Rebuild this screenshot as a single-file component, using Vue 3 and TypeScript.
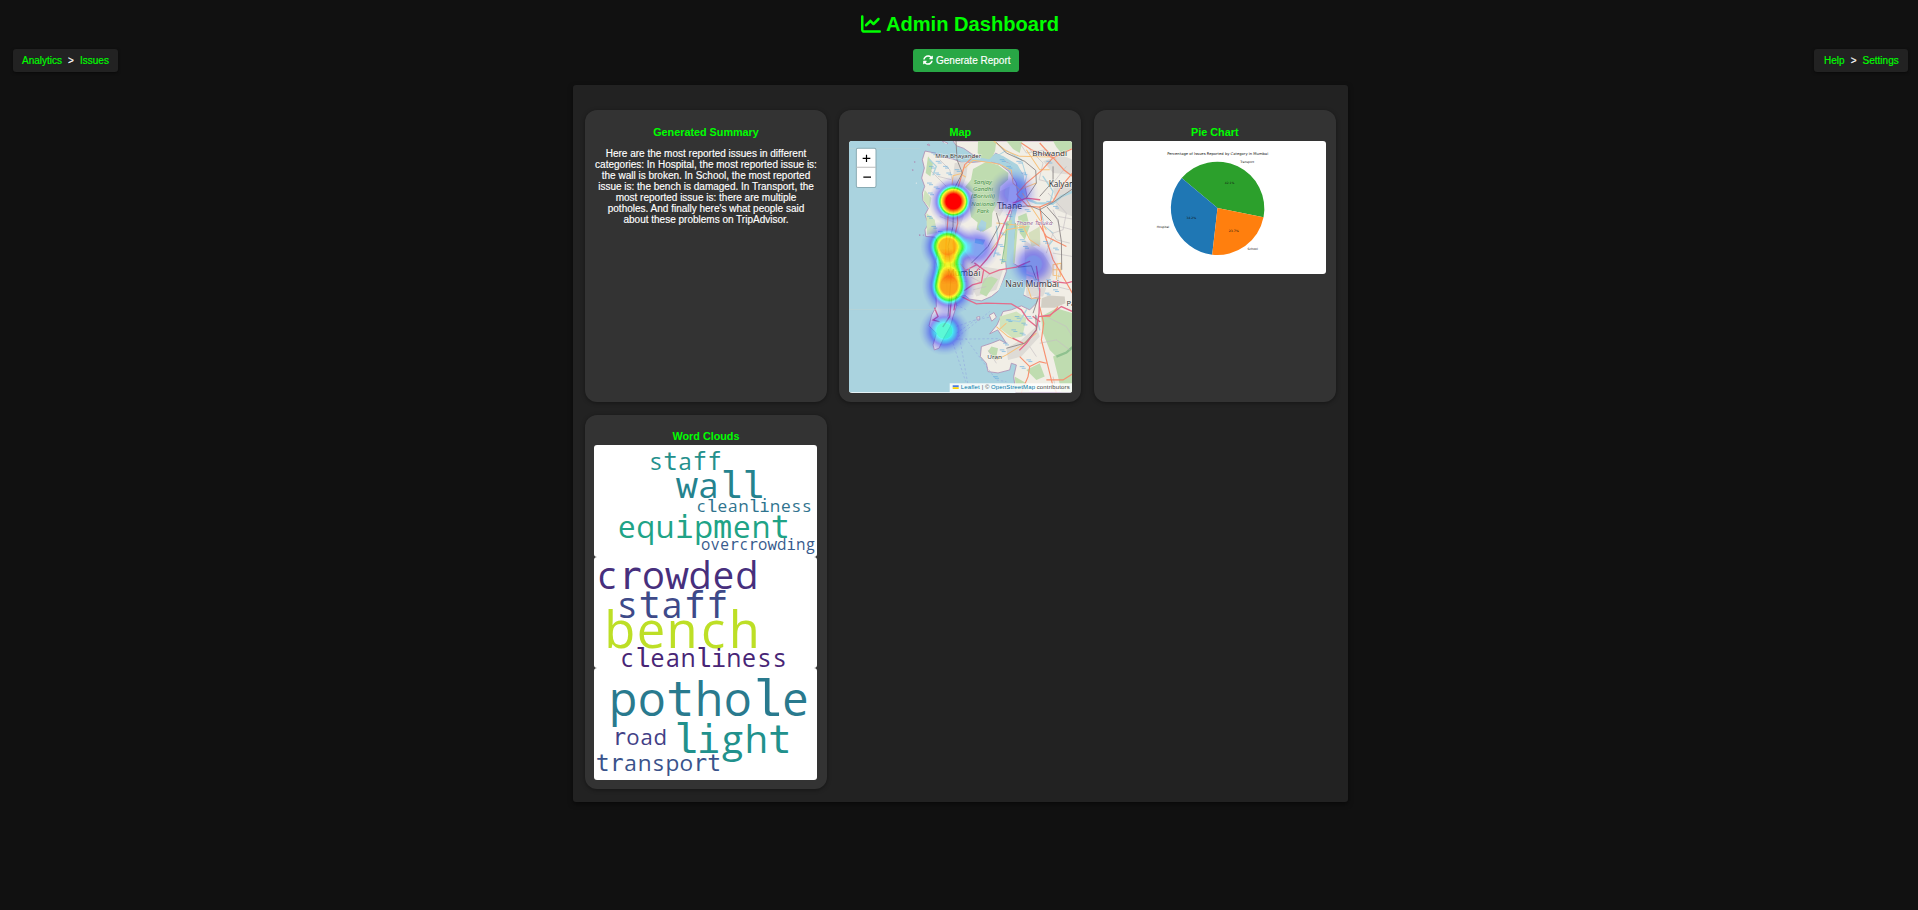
<script setup lang="ts">
interface Word { text: string; x0: number; x1: number; y: number; color: string }
interface Cloud { box: string; words: Word[] }
interface Label { text: string; x: number; y: number; w: number; size: number; kind: string }

const summary: string[] = [
  'Here are the most reported issues in different',
  'categories: In Hospital, the most reported issue is:',
  'the wall is broken. In School, the most reported',
  'issue is: the bench is damaged. In Transport, the',
  'most reported issue is: there are multiple',
  "potholes. And finally here's what people said",
  'about these problems on TripAdvisor.',
]

const clouds: Cloud[] = [
  {
    box: '42 120 669 336',
    words: [
      { text: 'staff', x0: 209, x1: 422, y: 194, color: '#24908c' },
      { text: 'wall', x0: 293, x1: 544, y: 279, color: '#25838e' },
      { text: 'cleanliness', x0: 350, x1: 694, y: 321, color: '#2f738e' },
      { text: 'equipment', x0: 116, x1: 625, y: 399, color: '#20a386' },
      { text: 'overcrowding', x0: 365, x1: 703, y: 436, color: '#375a8c' },
    ],
  },
  {
    box: '42 456 669 333',
    words: [
      { text: 'crowded', x0: 51, x1: 530, y: 551, color: '#472f7d' },
      { text: 'staff', x0: 113, x1: 440, y: 639, color: '#3e4a89' },
      { text: 'bench', x0: 80, x1: 532, y: 726, color: '#bddf26' },
      { text: 'cleanliness', x0: 122, x1: 618, y: 785, color: '#482576' },
    ],
  },
  {
    box: '42 204 669 336',
    words: [
      { text: 'pothole', x0: 93, x1: 682, y: 347, color: '#297a8e' },
      { text: 'road', x0: 101, x1: 258, y: 435, color: '#424086' },
      { text: 'light', x0: 285, x1: 630, y: 459, color: '#21918c' },
      { text: 'transport', x0: 51, x1: 420, y: 514, color: '#3a538b' },
    ],
  },
]

const advance = (w: Word): number => (w.x1 - w.x0) / (w.text.length - 0.16)
const charX = (w: Word, i: number): number => w.x0 + advance(w) * (0.42 + i)
const glyphClass = (ch: string): string => (ch === 'l' ? 'slab' : 'rftimw'.includes(ch) ? 'mono' : 'round')

const labels: Label[] = [
  { text: 'Mira Bhayander', x: 287, y: 85, w: 138, size: 18, kind: 'town' },
  { text: 'Bhiwandi', x: 578, y: 80, w: 104, size: 23, kind: 'town' },
  { text: 'Kalyan', x: 627, y: 172, w: 76, size: 24, kind: 'town' },
  { text: 'Thane', x: 472, y: 237, w: 75, size: 25, kind: 'town' },
  { text: 'Mumbai', x: 322, y: 438, w: 100, size: 25, kind: 'town' },
  { text: 'Navi Mumbai', x: 497, y: 473, w: 161, size: 25, kind: 'town' },
  { text: 'Uran', x: 443, y: 687, w: 44, size: 18, kind: 'town' },
  { text: 'Pa', x: 680, y: 528, w: 26, size: 21, kind: 'town' },
  { text: 'Thane Taluka', x: 530, y: 287, w: 108, size: 17, kind: 'district' },
  { text: 'Sanjay', x: 402, y: 162, w: 55, size: 18, kind: 'park' },
  { text: 'Gandhi', x: 400, y: 184, w: 60, size: 18, kind: 'park' },
  { text: '(Borivili)', x: 394, y: 206, w: 72, size: 18, kind: 'park' },
  { text: 'National', x: 395, y: 228, w: 70, size: 18, kind: 'park' },
  { text: 'Park', x: 411, y: 250, w: 37, size: 18, kind: 'park' },
]

const heat = [
  { x: 341, y: 215, rx: 75, ry: 75, o: 1 },
  { x: 324, y: 350, rx: 82, ry: 80, o: 0.86 },
  { x: 328, y: 467, rx: 82, ry: 92, o: 0.88 },
  { x: 328, y: 410, rx: 66, ry: 56, o: 0.52 },
  { x: 410, y: 355, rx: 70, ry: 70, o: 0.46 },
  { x: 520, y: 190, rx: 78, ry: 76, o: 0.42 },
  { x: 581, y: 403, rx: 76, ry: 76, o: 0.44 },
  { x: 314, y: 603, rx: 76, ry: 74, o: 0.62 },
]

// Short dashes that mark the mangrove belts along the creeks
const marsh: number[][] = [
  [275, 70], [288, 95], [268, 110], [284, 130], [262, 160], [282, 172], [265, 190], [310, 110], [320, 130], [345, 120],
  [262, 260], [275, 290], [295, 305], [480, 90], [500, 110], [530, 95], [545, 130], [500, 255], [490, 280], [480, 310],
  [475, 345], [465, 370], [480, 390], [535, 300], [540, 330], [550, 350], [615, 490], [640, 480], [585, 450], [620, 450],
  [500, 570], [525, 560], [545, 580], [515, 600], [540, 610], [560, 560], [480, 660], [490, 640], [590, 70], [620, 95],
  [555, 240], [640, 230], [620, 215], [460, 740], [560, 690], [540, 710], [640, 355], [610, 335],
]
</script>

<template>
  <div class="page">
    <h1 class="brand">
      <svg class="brand-icon" viewBox="0 0 512 512"><path d="M64 64c0-17.7-14.3-32-32-32S0 46.3 0 64V400c0 44.2 35.8 80 80 80H480c17.7 0 32-14.3 32-32s-14.3-32-32-32H80c-8.8 0-16-7.2-16-16V64zm406.6 86.6c12.5-12.5 12.5-32.8 0-45.3s-32.8-12.5-45.3 0L320 210.7l-57.4-57.4c-12.5-12.5-32.8-12.5-45.3 0l-112 112c-12.5 12.5-12.5 32.8 0 45.3s32.8 12.5 45.3 0L240 221.3l57.4 57.4c12.5 12.5 32.8 12.5 45.3 0l128-128z" /></svg>
      <span>Admin Dashboard</span>
    </h1>

    <nav class="bar">
      <div class="crumbs left"><a>Analytics</a><b>&gt;</b><a>Issues</a></div>
      <button class="report">
        <svg viewBox="0 0 512 512"><path d="M370.72 133.28C339.458 104.008 298.888 87.962 255.848 88c-77.458.068-144.328 53.178-162.791 126.85-1.344 5.363-6.122 9.15-11.651 9.15H24.103c-7.498 0-13.194-6.807-11.807-14.176C33.933 94.924 134.813 8 256 8c66.448 0 126.791 26.136 171.315 68.685L463.03 40.97C478.149 25.851 504 36.559 504 57.941V192c0 13.255-10.745 24-24 24H345.941c-21.382 0-32.09-25.851-16.971-40.971l41.75-41.749zM32 296h134.059c21.382 0 32.09 25.851 16.971 40.971l-41.75 41.75c31.262 29.273 71.835 45.319 114.876 45.28 77.418-.07 144.315-53.144 162.787-126.849 1.344-5.363 6.122-9.15 11.651-9.15h57.304c7.498 0 13.194 6.807 11.807 14.176C478.067 417.076 377.187 504 256 504c-66.448 0-126.791-26.136-171.315-68.685L48.97 471.03C33.851 486.149 8 475.441 8 454.059V320c0-13.255 10.745-24 24-24z" /></svg>
        <span>Generate Report</span>
      </button>
      <div class="crumbs right"><a>Help</a><b>&gt;</b><a>Settings</a></div>
    </nav>

    <main class="panel">
      <section class="card">
        <h3>Generated Summary</h3>
        <p class="summary"><span v-for="line in summary" :key="line">{{ line }}</span></p>
      </section>

      <section class="card">
        <h3>Map</h3>
        <svg class="map" viewBox="28 34 670 753" preserveAspectRatio="none">
          <defs>
            <radialGradient id="spot">
              <stop offset="0" stop-opacity="1" /><stop offset=".3" stop-opacity="1" />
              <stop offset=".48" stop-opacity=".8" /><stop offset=".56" stop-opacity=".66" />
              <stop offset=".63" stop-opacity=".5" /><stop offset=".75" stop-opacity=".27" />
              <stop offset=".88" stop-opacity=".09" /><stop offset="1" stop-opacity="0" />
            </radialGradient>
            <filter id="ramp" x="0" y="0" width="1" height="1" color-interpolation-filters="sRGB">
              <feColorMatrix values="0 0 0 1 0  0 0 0 1 0  0 0 0 1 0  0 0 0 1 0" />
              <feComponentTransfer>
                <feFuncR type="table" tableValues="0 0 0 0 0 0 0 0 1 1 1" />
                <feFuncG type="table" tableValues="0 0 0 0 0 .5 1 1 1 .5 0" />
                <feFuncB type="table" tableValues="1 1 1 1 1 1 1 0 0 0 0" />
              </feComponentTransfer>
            </filter>
          </defs>
          <rect x="28" y="34" width="670" height="753" fill="#aad3df" />

          <!-- land -->
          <g fill="#f1eee6" stroke="#ad8fb5" stroke-width="2.5" stroke-linejoin="round">
            <path d="M340 34 350 48 372 56 395 72 420 86 450 90 468 70 478 76 500 96 530 108 548 132 556 170 562 200 545 212 528 232 522 262 528 300 524 350 520 400 545 415 552 450 550 495 575 507 598 500 590 520 570 540 545 528 515 540 490 545 472 585 450 612 474 600 500 640 480 630 455 640 425 650 422 680 440 700 445 725 475 729 510 720 515 700 530 705 522 740 528 787 700 787 700 34z" />
            <path d="M256 64 285 70 310 82 340 88 365 98 400 98 440 94 480 104 508 125 530 160 535 205 517 240 510 270 504 330 498 390 500 425 480 480 455 500 425 513 390 508 374 495 352 504 350 530 340 560 332 590 312 625 298 655 284 660 280 645 290 610 268 588 276 555 290 530 288 470 298 430 288 395 298 345 286 322 258 320 256 300 266 282 256 255 266 236 250 212 248 190 255 170 246 145 254 115 248 90z" />
            <path d="M449 556 463 548 470 562 456 574z" />
            <path d="M411 562 420 560 420 570 413 571z" />
            <path d="M262 45 268 43 270 48z" /><path d="M308 34 318 48 324 40z" />
          </g>

          <!-- urban areas -->
          <g fill="#dedbd6">
            <path d="M345 100 385 96 380 140 365 180 372 260 350 320 320 320 312 240 335 180z" />
            <path d="M305 330 350 325 380 370 420 420 400 495 350 495 300 480z" />
            <path d="M470 190 510 170 505 215 480 260 460 240z" />
            <path d="M554 330 610 370 640 420 610 500 560 500 556 430z" />
            <path d="M610 95 665 75 698 90 698 135 640 130z" />
            <path d="M640 170 698 160 698 260 650 240z" />
            <path d="M500 655 545 630 590 590 600 620 545 680 505 690z" />
            <path d="M385 450 430 410 490 420 470 480 410 500z" />
          </g>
          <g fill="#bfdcb0">
            <path d="M415 34 470 34 466 64 455 90 430 92 414 70z" />
            <path d="M440 96 475 106 506 130 505 150 482 170 476 215 458 250 456 290 430 306 410 300 414 278 394 262 388 220 398 190 376 172 394 150 400 118z" />
            <path d="M640 34 698 34 698 55 665 70 650 52z" />
            <path d="M535 260 560 250 570 290 555 330 540 310z" />
            <path d="M500 275 517 270 510 390 490 400z" /><path d="M520 290 535 280 525 400 517 400z" />
            <path d="M432 446 455 440 475 448 440 500 420 490z" />
            <path d="M604 560 650 535 698 550 698 680 660 690 630 660 610 610z" />
            <path d="M640 680 698 650 698 787 665 787 655 740z" />
            <path d="M560 720 600 700 615 740 590 750z" />
            <path d="M525 740 560 760 570 787 530 787z" /><path d="M455 650 475 655 468 690 445 665z" />
            <path d="M500 34 548 34 540 70 520 58z" /><path d="M265 80 280 100 272 140 258 130z" />
            <path d="M566 310 600 290 602 345 575 350z" fill="#d6dfbd" />
          </g>
          <g fill="none" stroke="#8fc18f" stroke-width="3">
            <path d="M502 280 496 340 486 402M527 280 522 330" /><path d="M698 652 680 668 650 680" stroke-width="7" />
          </g>
          <g fill="#cfe3bd">
            <path d="M480 560 530 545 560 565 548 620 520 625 480 595z" />
            <path d="M255 180 275 205 270 235 250 210z" /><path d="M260 250 285 270 292 310 262 315z" />
          </g>
          <path d="M606 505 628 497 675 500 677 520 645 534 604 534z" fill="#d2cec4" />

          <!-- creeks and lakes -->
          <g fill="none" stroke="#aad3df" stroke-linecap="round" stroke-linejoin="round">
            <path d="M300 38 350 62 400 84 450 94 468 76 490 84 530 108 548 140 553 200 530 228 522 262 518 310 508 390" stroke-width="9" />
            <path d="M516 300 510 400 530 440" stroke-width="20" /><path d="M545 200 590 220 640 222 665 200 698 186" stroke-width="7" />
            <path d="M470 80 500 62 545 90 560 140 550 190M600 230 615 290 640 310" stroke-width="3" />
            <path d="M500 570 540 575 560 540M600 600 590 560M610 140 640 185 632 215" stroke-width="4" />
            <path d="M470 290 475 340 462 380M545 430 580 440 600 485M270 90 290 110 280 135M625 350 640 330" stroke-width="4" />
          </g>
          <path d="M425 270 440 278 438 298 422 306 415 290zM407 326 437 330 430 345 405 340z" fill="#aad3df" />
          <path d="M497 440 560 395 560 460 548 510 480 506 470 495z" fill="#aad3df" />

          <!-- minor roads -->
          <g fill="none" stroke="#c5bfc2" stroke-width="2">
            <path d="M570 60 610 100 598 150 640 160 680 110M640 240 660 290 698 300M630 300 650 330 690 340M655 260 698 268M640 370 698 380M665 400 650 470 690 480M620 560 680 590 698 620" />
            <path d="M300 90 330 120 345 180M295 140 335 150M270 120 320 170M300 260 350 280M390 440 430 460 450 430M400 480 440 470" />
            <path d="M625 190 680 250 670 300 640 310 620 370M600 640 650 630 690 660M570 650 590 680M640 740 650 787M445 660 470 700M540 40 560 70 620 60 650 90" />
            <path d="M318 330 322 490M300 360 350 365M300 400 370 405M300 450 380 455M345 330 352 490" />
          </g>
          <g fill="none" stroke="#f7c27d" stroke-width="3">
            <path d="M337 165 340 138 362 132 378 142M363 134 375 110M460 100 480 104 515 122 520 160 540 180 590 160M462 34 500 64 540 80 640 82M548 190 570 225 600 270 620 300" />
            <path d="M470 280 550 288 570 330 600 350M455 360 500 300 560 290M640 405 665 400 662 440 640 436zM640 420 664 420M652 400 650 450M350 330 360 400 385 430" />
            <path d="M470 590 505 620 550 640M470 690 500 675 540 650 590 610M478 600 500 580M560 460 575 505 603 505M460 100 400 92 375 115M560 60 600 120 630 120" />
          </g>
          <g fill="none" stroke="#f7906f" stroke-width="3.5">
            <path d="M404 78 375 105 365 140 350 190 354 280 340 340 345 410M352 180 325 260 320 330 315 410M640 84 606 122 560 160 530 195M640 84 672 120 698 140M700 56 640 84 600 40" />
            <path d="M532 196 565 230 600 232 640 215 665 170 698 130M600 230 610 300 640 390 675 450 698 490M590 270 620 320 680 350M545 40 575 60 640 84" />
            <path d="M600 530 612 580 605 630 620 690 640 770 650 787M540 680 570 710 600 695 620 700M620 750 670 750 698 732M570 710 565 740 545 787M605 560 630 560 655 530" />
          </g>
          <g fill="none" stroke="#e46c8b" stroke-width="4" stroke-linecap="round">
            <path d="M365 500 385 510 410 522 440 520 515 522 545 540 565 570 590 590M374 482 398 465 425 458 432 420 405 400M372 425 410 405 450 432 480 420 530 412 570 395" />
            <path d="M512 240 486 300 470 350 440 390 405 430M520 220 560 205 600 210M590 410 600 480 598 550 590 600 560 640 540 660M550 640 520 625M598 560 630 556 665 530 698 545M640 455 680 460 698 455" />
            <path d="M340 310 345 370M336 500 330 560 310 590M350 500 343 540M285 535 295 560 280 570 298 575M580 560 600 575" />
          </g>
          <g fill="none" stroke="#858080" stroke-width="2.5">
            <path d="M349 34 352 90 368 130 342 180 340 290 325 350 335 430 325 560M470 250 480 285 445 350 395 400M470 38 500 70 555 95 588 122 590 160 560 205" />
            <path d="M480 236 570 228 600 240 640 218 698 178M622 232 655 270 665 335 666 420M600 240 640 280M535 412 575 408 590 450M588 555 590 600 555 640 500 655" />
            <path d="M595 505 580 550M640 110 640 155 600 200" />
          </g>
          <g fill="none" stroke="#8d9fe0" stroke-width="1.8" stroke-dasharray="7 6" opacity=".8">
            <path d="M355 620 450 545M350 610 408 570 450 562M350 590 420 565M350 628 480 626M360 625 384 760M340 640 378 755M378 625 470 750 500 755M350 525 380 540" />
          </g>
          <path d="M28 539H290M28 57H240" stroke="#bfd5d2" stroke-width="1.5" />
          <path v-for="(m, i) in marsh" :key="i" :d="`M${m[0]} ${m[1]}h14m-8 5h12`" stroke="#5ba9e0" stroke-width="2" opacity=".9" />
          <g fill="#ad8fb5"><circle cx="225" cy="97" r="2.5" /><circle cx="219" cy="121" r="2.5" /><circle cx="240" cy="316" r="2.5" /><circle cx="251" cy="316" r="2" /></g>
          <circle cx="230" cy="160" r="2" fill="#e9efed" />

          <text v-for="l in labels" :key="l.text" :class="l.kind" :x="l.x" :y="l.y" :font-size="l.size" :textLength="l.w" lengthAdjust="spacingAndGlyphs">{{ l.text }}</text>

          <g filter="url(#ramp)">
            <rect x="28" y="34" width="670" height="753" fill="none" />
            <ellipse v-for="(h, i) in heat" :key="i" :cx="h.x" :cy="h.y" :rx="h.rx" :ry="h.ry" fill="url(#spot)" :opacity="h.o" />
          </g>

          <rect x="50" y="56" width="59" height="117" rx="5" fill="#fff" stroke="#89aab3" stroke-width="3" />
          <path d="M50 112.500H109" stroke="#bbb" stroke-width="3" />
          <path d="M69 86H92M80.500 75V97M71 142H94" stroke="#000" stroke-width="3.600" />

          <rect x="330" y="760" width="368" height="27" fill="#fff" opacity=".85" />
          <path d="M339 766h18v6h-18z" fill="#4c7be1" /><path d="M339 772h18v5h-18z" fill="#ffd500" />
          <g class="credit">
            <text x="363" y="777" textLength="57" fill="#0078a8">Leaflet</text>
            <text x="426" y="777" textLength="23" fill="#555">| ©</text>
            <text x="454" y="777" textLength="132" fill="#0078a8">OpenStreetMap</text>
            <text x="591" y="777" textLength="99" fill="#444">contributors</text>
          </g>
        </svg>
      </section>

      <section class="card">
        <h3>Pie Chart</h3>
        <svg class="pie" viewBox="54 123 669 399">
          <path d="M397 324 535 352A141 141 0 0 0 289.500 234z" fill="#2ca02c" />
          <path d="M397 324 289.500 234A141 141 0 0 0 381 464z" fill="#1f77b4" />
          <path d="M397 324 381 464A141 141 0 0 0 535 352z" fill="#ff7f0e" />
          <text class="pie-title" x="246" y="165" textLength="303" lengthAdjust="spacingAndGlyphs">Percentage of Issues Reported by Category in Mumbai</text>
          <text x="465" y="188" textLength="42" lengthAdjust="spacingAndGlyphs">Transport</text>
          <text x="215" y="383" textLength="37" lengthAdjust="spacingAndGlyphs">Hospital</text>
          <text x="487" y="451" textLength="31" lengthAdjust="spacingAndGlyphs">School</text>
          <text x="419" y="253" textLength="28" lengthAdjust="spacingAndGlyphs">42.1%</text>
          <text x="304" y="358" textLength="29" lengthAdjust="spacingAndGlyphs">34.2%</text>
          <text x="431" y="395" textLength="30" lengthAdjust="spacingAndGlyphs">23.7%</text>
        </svg>
      </section>

      <section class="card clouds">
        <h3>Word Clouds</h3>
        <svg v-for="c in clouds" :key="c.box" class="cloud" :viewBox="c.box" preserveAspectRatio="none">
          <text v-for="w in c.words" :key="w.text" :y="w.y" :fill="w.color" :font-size="advance(w) / 0.602"><tspan v-for="(ch, i) in w.text.split('')" :key="i" :x="charX(w, i)" :class="glyphClass(ch)">{{ ch }}</tspan></text>
        </svg>
      </section>
    </main>
  </div>
</template>

<style>
body {
  margin: 0;
  background: #111;
}
</style>

<style scoped>
.page {
  box-sizing: border-box;
  min-height: 910px;
  background: #111;
  color: #fff;
  font-family: "Liberation Sans", Arial, sans-serif;
  font-size: 10px;
  -webkit-text-stroke: 0.15px;
}
.page svg,
.brand,
.card h3 {
  -webkit-text-stroke: 0;
}
.brand {
  display: flex;
  justify-content: center;
  align-items: center;
  gap: 5px;
  box-sizing: border-box;
  height: 49px;
  margin: 0;
  padding-left: 2px;
  color: #0f0;
  font-size: 20.1px;
  line-height: 24px;
}
.brand-icon {
  width: 20px;
  height: 20px;
  margin-top: -2px;
  fill: currentColor;
}
.brand span {
  margin-top: -1px;
}
.bar {
  display: flex;
  justify-content: space-between;
  height: 23px;
  padding: 0 10px 0 13px;
}
.crumbs {
  display: flex;
  align-items: center;
  box-sizing: border-box;
  height: 23px;
  padding: 0 9px;
  border-radius: 3px;
  background: #222;
  box-shadow: 0 1px 3px rgba(0, 0, 0, 0.5);
}
.crumbs a {
  color: #0f0;
}
.crumbs b {
  width: 18px;
  text-align: center;
  font-weight: 400;
}
.left {
  width: 105px;
}
.right {
  width: 94px;
  padding-left: 10px;
}
.report {
  display: flex;
  align-items: center;
  gap: 3px;
  box-sizing: border-box;
  width: 106px;
  height: 23px;
  padding: 0 9px 0 10px;
  border: 0;
  border-radius: 3px;
  background: #28a745;
  color: #fff;
  font: 10px "Liberation Sans", Arial, sans-serif;
  white-space: nowrap;
}
.report svg {
  flex: none;
  width: 10px;
  height: 10px;
  margin-top: -1px;
  fill: currentColor;
}
.panel {
  display: grid;
  grid-template-columns: repeat(3, 242px);
  grid-template-rows: 292px 374px;
  gap: 13px 12.4px;
  box-sizing: border-box;
  width: 775px;
  height: 717px;
  margin: 13px 0 0 573px;
  padding: 25px 12px 13px;
  border-radius: 3px;
  background: #222;
  box-shadow: 0 2px 5px rgba(0, 0, 0, 0.5);
}
.card {
  box-sizing: border-box;
  padding: 15px 9.3px 9px;
  border-radius: 12px;
  background: #333;
  box-shadow: 0 1px 4px rgba(0, 0, 0, 0.4);
  text-align: center;
}
.card h3 {
  height: 16.3px;
  margin: 0;
  color: #0f0;
  font-size: 10.8px;
  line-height: 14px;
}
.summary {
  display: flex;
  flex-direction: column;
  align-items: center;
  margin: 6.7px 0 0;
  line-height: 11px;
  white-space: nowrap;
}
.map,
.pie,
.cloud {
  display: block;
  width: 223.4px;
  border-radius: 3px;
  background: #fff;
}
.map {
  height: 251.3px;
}
.pie {
  height: 133px;
}
.clouds {
  padding-top: 14px;
}
.clouds h3 {
  height: 16px;
}
.cloud {
  width: 223px;
  height: 111.7px;
}
.cloud text {
  font-family: "DejaVu Sans Mono", monospace;
  text-anchor: middle;
}
.cloud .slab {
  font-family: "Liberation Mono", monospace;
  font-size: 1.08em;
}
.cloud .round {
  font-family: "Open Sans", sans-serif;
  font-size: 0.98em;
}
.pie text {
  font-family: "DejaVu Sans", sans-serif;
  font-size: 9px;
  fill: #111;
}
.pie .pie-title {
  font-size: 11px;
}
.town,
.district,
.park {
  font-family: "Noto Sans", sans-serif;
  fill: #3a3a3a;
  stroke: rgba(255, 255, 255, 0.6);
  stroke-width: 3px;
  paint-order: stroke;
}
.district {
  fill: #9a6d9d;
  font-style: italic;
}
.park {
  fill: #4b8f4b;
  font-style: italic;
  stroke: rgba(220, 240, 210, 0.6);
}
.credit {
  font-family: "Liberation Sans", Arial, sans-serif;
  font-size: 18px;
}
</style>
